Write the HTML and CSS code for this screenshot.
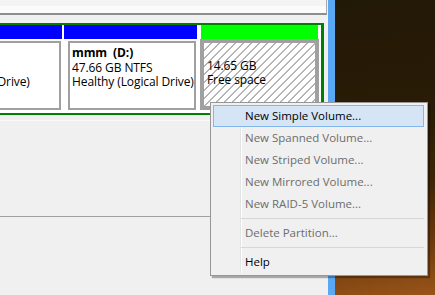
FILE: index.html
```html
<!DOCTYPE html>
<html>
  <head>
    <meta charset="UTF-8">
    <title>Disk Management</title>
    <link rel="stylesheet" href="styles.css">
  </head>
  <body>
    <div class="window">
      <div class="top-strip"></div>
      <div class="disk-row">
        <div class="extended">
          <div class="part part-c">
            <div class="part-head logical"></div>
            <div class="part-body">
              <div class="part-frame">
                <div class="part-name">&nbsp;</div>
                <div>&nbsp;</div>
                <div>Healthy (Logical Drive)</div>
              </div>
            </div>
          </div>
          <div class="part part-d">
            <div class="part-head logical"></div>
            <div class="part-body">
              <div class="part-frame">
                <div class="part-name">mmm&nbsp; (D:)</div>
                <div>47.66 GB NTFS</div>
                <div>Healthy (Logical Drive)</div>
              </div>
            </div>
          </div>
          <div class="part part-free">
            <div class="part-head free"></div>
            <div class="part-body">
              <div class="part-frame selected">
                <div class="part-name">&nbsp;</div>
                <div>14.65 GB</div>
                <div>Free space</div>
              </div>
            </div>
          </div>
        </div>
      </div>
      <div class="lower-pane"></div>
    </div>
    <div class="window-edge"></div>
    <div class="desktop"></div>

    <!-- context menu for the free space -->
    <ul class="menu">
      <li class="item hover">New Simple Volume...</li>
      <li class="item disabled">New Spanned Volume...</li>
      <li class="item disabled">New Striped Volume...</li>
      <li class="item disabled">New Mirrored Volume...</li>
      <li class="item disabled">New RAID-5 Volume...</li>
      <li class="sep"></li>
      <li class="item disabled">Delete Partition...</li>
      <li class="sep"></li>
      <li class="item">Help</li>
    </ul>
  </body>
</html>
```

FILE: styles.css
```css
body {
  margin: 0;
  width: 435px;
  height: 295px;
  display: flex;
  overflow: hidden;
  font-family: "Open Sans", "Noto Sans", sans-serif;
  font-size: 12px;
  color: #000;
}

.window {
  width: 328px;
  background-color: #f0f0f0;
  display: flex;
  flex-direction: column;
}

.top-strip {
  width: 326px;
  height: 13px;
  background: linear-gradient(#f4f4f4 0, #f4f4f4 6px, #fbfbfb 6px, #fbfbfb 13px);
  border-bottom: 2px solid #8e8e8e;
  border-right: 1px solid #a8a8a8;
}

.disk-row {
  padding-top: 8px;
  height: 97px;
  border-bottom: 1px solid #fafafa;
}

/* extended partition outline */
.extended {
  display: flex;
  gap: 2px;
  margin: 0 4px 0 -100px;
  height: 88px;
  background-color: #fff;
  border-top: 2px solid #008000;
  border-right: 3px solid #008000;
  border-bottom: 2px solid #008000;
  padding-right: 2px;
}

.part {
  display: flex;
  flex-direction: column;
}

.part-c {
  width: 162px;
}

.part-d {
  width: 133px;
}

.part-free {
  flex: 1;
  margin-left: 1px;
}

.part-head {
  height: 14px;
}

.part-head.logical {
  background-color: #0000ff;
}

.part-head.free {
  background-color: #00ff00;
  margin: 0 1px;
}

.part-body {
  flex: 1;
  display: flex;
  padding: 2px 1px 3px 4px;
}

.part-free .part-body {
  padding: 0 0 3px 0;
}

.part-frame {
  flex: 1;
  border: 2px solid #a0a0a0;
  padding: 3px 0 0 2px;
  line-height: 14.5px;
  letter-spacing: -0.1px;
  white-space: nowrap;
  overflow: hidden;
}

.part-frame.selected {
  border: 4px solid #a0a0a0;
  padding: 1px 0 0 3px;
  background: repeating-linear-gradient(135deg, #fff 0, #fff 4.6px, #b4b4b4 4.6px, #b4b4b4 5.66px);
}

.part-name {
  font-weight: bold;
}

.lower-pane {
  height: 95px;
  border-bottom: 1px solid #a0a0a0;
}

.window-edge {
  width: 7px;
  background-color: #5aa8f4;
}

.desktop {
  flex: 1;
  background: linear-gradient(172deg, #221806 0%, #2a1c06 40%, #3e2408 62%, #6a3a0e 82%, #9a5418 100%);
}

/* context menu */
.menu {
  position: absolute;
  left: 210px;
  top: 102px;
  width: 211px;
  margin: 0;
  padding: 2px 3px 2px 2px;
  list-style: none;
  font-size: 11.5px;
  background-color: #f0f0f0;
  border: 1px solid #979797;
  box-shadow: 2px 2px 1px rgba(0, 0, 0, 0.3);
}

.menu::before {
  content: "";
  position: absolute;
  left: 29px;
  top: 2px;
  bottom: 2px;
  width: 1px;
  background-color: #e2e3e3;
  border-right: 1px solid #fff;
}

.item {
  position: relative;
  height: 22px;
  line-height: 22px;
  padding-left: 32px;
  box-sizing: border-box;
  white-space: nowrap;
}

.item.hover {
  background-color: #d5e5f6;
  border: 1px solid #82b6ec;
  padding-left: 31px;
  line-height: 20px;
}

.item.disabled {
  color: #6d6d6d;
}

.sep {
  position: relative;
  height: 7px;
}

.sep::after {
  content: "";
  position: absolute;
  left: 28px;
  right: 0;
  top: 3px;
  height: 1px;
  background-color: #d7d7d7;
}
```
